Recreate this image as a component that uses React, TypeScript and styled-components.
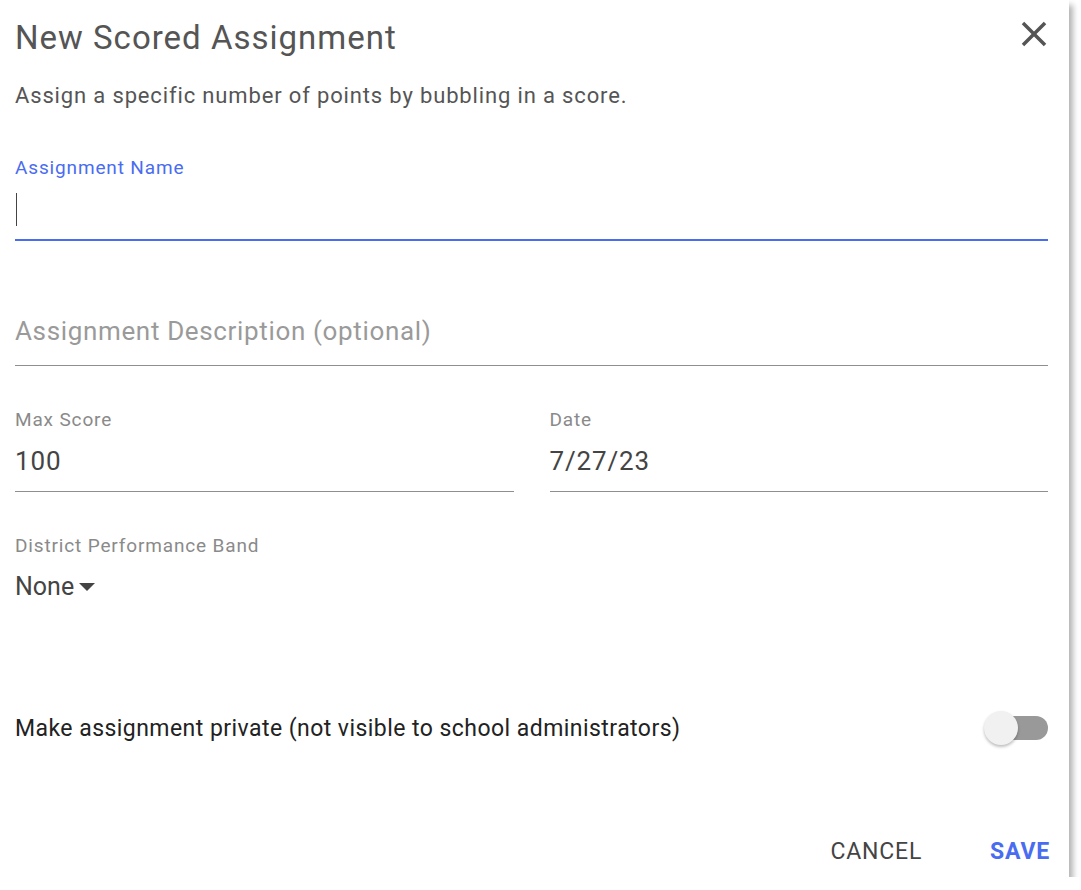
import React, { useState } from 'react';
import styled, { createGlobalStyle } from 'styled-components';

const GlobalStyle = createGlobalStyle`
  html, body {
    margin: 0;
    padding: 0;
    background: #ffffff;
  }
  body {
    font-family: Roboto, "Liberation Sans", Arial, sans-serif;
  }
`;

const Dialog = styled.div`
  width: 1069px;
  height: 877px;
  box-sizing: border-box;
  background: #fff;
  padding: 0 21px 0 15px;
  display: flex;
  flex-direction: column;
  box-shadow: 4px 5px 6px rgba(0, 0, 0, 0.3);
`;

const Header = styled.div`
  display: flex;
  align-items: center;
  justify-content: space-between;
  padding-top: 18px;
`;

const Title = styled.h2`
  margin: 0;
  font-size: 33px;
  line-height: 40px;
  font-weight: 400;
  letter-spacing: 1px;
  color: #555;
`;

const CloseButton = styled.button`
  border: 0;
  background: none;
  padding: 0;
  margin: -9px -7px 0 0;
  width: 42px;
  height: 42px;
  cursor: pointer;
  color: #555;
  display: flex;
`;

const Subtitle = styled.p`
  margin: 24px 0 0;
  font-size: 22px;
  line-height: 28px;
  letter-spacing: 0.85px;
  color: #555;
`;

const Field = styled.div<{ $top: number }>`
  display: flex;
  flex-direction: column;
  margin-top: ${(p) => p.$top}px;
`;

const Label = styled.label<{ $focused?: boolean }>`
  font-size: 19px;
  line-height: 24px;
  letter-spacing: 0.85px;
  color: ${(p) => (p.$focused ? '#4a6cf0' : '#8a8a8a')};
`;

const Input = styled.div<{ $focused?: boolean; $placeholder?: boolean; $gap?: number; $pad?: number }>`
  margin-top: ${(p) => p.$gap ?? 12}px;
  padding-bottom: ${(p) => p.$pad ?? 13}px;
  height: 34px;
  font-size: 26px;
  line-height: 34px;
  letter-spacing: ${(p) => (p.$placeholder ? 0.65 : 0.85)}px;
  color: ${(p) => (p.$placeholder ? '#9a9a9a' : '#444')};
  border-bottom: ${(p) => (p.$focused ? '2px solid #4a6cf0' : '1px solid #8f8f8f')};
  display: flex;
  align-items: center;
`;

const Caret = styled.span`
  width: 1px;
  height: 33px;
  background: #444;
  margin-left: 1px;
`;

const Row = styled.div`
  display: flex;
  gap: 36px;

  & > * {
    flex: 1;
  }
`;

const Select = styled.div`
  margin-top: 12px;
  height: 34px;
  font-size: 25px;
  line-height: 34px;
  color: #444;
  display: flex;
  align-items: center;
  gap: 5px;
`;

const SwitchRow = styled.div`
  margin-top: 107px;
  height: 34px;
  display: flex;
  align-items: center;
  justify-content: space-between;
  font-size: 23px;
  letter-spacing: 0.45px;
  color: #222;
`;

const Track = styled.button<{ $on: boolean }>`
  position: relative;
  width: 62px;
  height: 24px;
  border: 0;
  padding: 0;
  border-radius: 12px;
  background: ${(p) => (p.$on ? '#9fb0f6' : '#999')};
  cursor: pointer;
`;

const Thumb = styled.span<{ $on: boolean }>`
  position: absolute;
  top: -5px;
  left: ${(p) => (p.$on ? '28px' : '-2px')};
  width: 34px;
  height: 34px;
  border-radius: 50%;
  background: ${(p) => (p.$on ? '#4a6cf0' : '#f1f1f1')};
  box-shadow: 0 2px 3px rgba(0, 0, 0, 0.25);
`;

const Actions = styled.div`
  margin-top: auto;
  padding-bottom: 10px;
  display: flex;
  justify-content: flex-end;
  gap: 68px;
  margin-right: -2px;
`;

const ActionButton = styled.button<{ $primary?: boolean }>`
  border: 0;
  background: none;
  padding: 0;
  font-family: inherit;
  font-size: 23px;
  line-height: 30px;
  letter-spacing: 0.8px;
  font-weight: ${(p) => (p.$primary ? 700 : 400)};
  color: ${(p) => (p.$primary ? '#4a6cf0' : '#444')};
  cursor: pointer;
`;

export default function App() {
  const [isPrivate, setIsPrivate] = useState(false);

  return (
    <>
      <GlobalStyle />
      <Dialog>
        <Header>
          <Title>New Scored Assignment</Title>
          <CloseButton aria-label="Close">
            <svg width="42" height="42" viewBox="0 0 24 24" fill="currentColor">
              <path d="M19 6.41 17.59 5 12 10.59 6.41 5 5 6.41 10.59 12 5 17.59 6.41 19 12 13.41 17.59 19 19 17.59 13.41 12z" />
            </svg>
          </CloseButton>
        </Header>
        <Subtitle>Assign a specific number of points by bubbling in a score.</Subtitle>

        <Field $top={46}>
          <Label $focused>Assignment Name</Label>
          <Input $focused $pad={13}>
            <Caret />
          </Input>
        </Field>

        <Field $top={73}>
          <Input $placeholder $gap={0} $pad={17}>
            Assignment Description (optional)
          </Input>
        </Field>

        <Row>
          <Field $top={42}>
            <Label>Max Score</Label>
            <Input>100</Input>
          </Field>
          <Field $top={42}>
            <Label>Date</Label>
            <Input>7/27/23</Input>
          </Field>
        </Row>

        <Field $top={42}>
          <Label>District Performance Band</Label>
          <Select>
            None
            <svg width="16" height="9" viewBox="0 0 16 9" fill="#444">
              <path d="M0 0h16L8 8z" />
            </svg>
          </Select>
        </Field>

        <SwitchRow>
          <span>Make assignment private (not visible to school administrators)</span>
          <Track $on={isPrivate} onClick={() => setIsPrivate(!isPrivate)} aria-label="Private">
            <Thumb $on={isPrivate} />
          </Track>
        </SwitchRow>

        <Actions>
          <ActionButton>CANCEL</ActionButton>
          <ActionButton $primary>SAVE</ActionButton>
        </Actions>
      </Dialog>
    </>
  );
}
